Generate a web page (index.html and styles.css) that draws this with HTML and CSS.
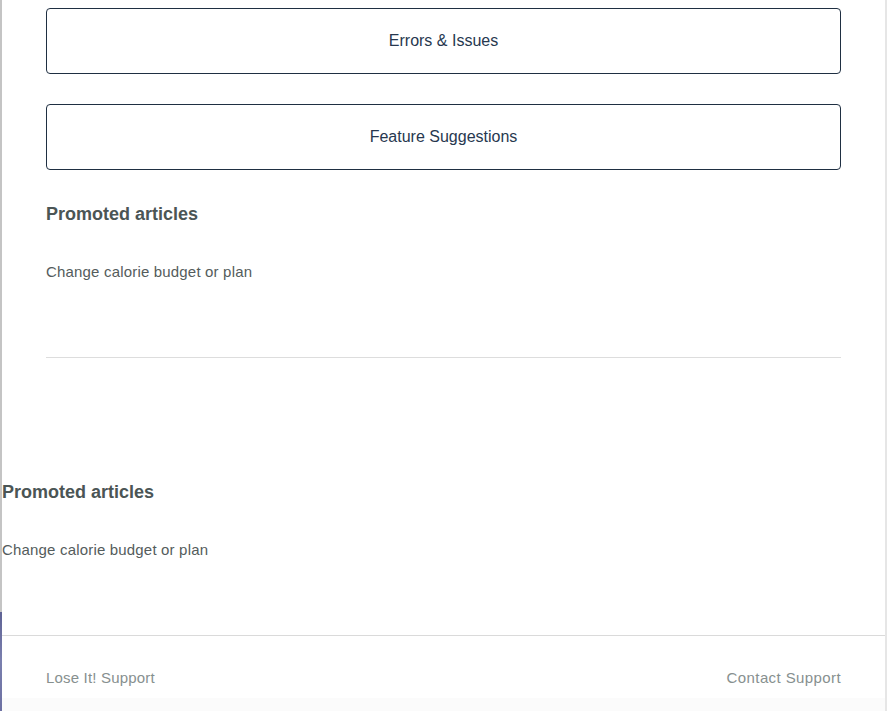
FILE: index.html
```html
<!DOCTYPE html>
<html lang="en">
<head>
<meta charset="utf-8">
<title>Lose It! Support</title>
<link rel="stylesheet" href="styles.css">
</head>
<body>
<div class="page">
  <div class="edge"></div>
  <div class="frame">
    <main class="content">
      <a class="tile" href="#">Errors &amp; Issues</a>
      <a class="tile tile-second" href="#">Feature Suggestions</a>
      <section class="promoted">
        <h3 class="promoted-title">Promoted articles</h3>
        <a class="promoted-link" href="#">Change calorie budget or plan</a>
      </section>
      <hr class="divider">
    </main>
    <section class="promoted promoted-outer">
      <h3 class="promoted-title">Promoted articles</h3>
      <a class="promoted-link" href="#">Change calorie budget or plan</a>
    </section>
    <footer class="footer">
      <a class="footer-link" href="#">Lose It! Support</a>
      <a class="footer-link" href="#">Contact Support</a>
    </footer>
  </div>
</div>
</body>
</html>
```
FILE: styles.css
```css
html, body {
  margin: 0;
  padding: 0;
  background: #ffffff;
  font-family: "Liberation Sans", Arial, Helvetica, sans-serif;
}

.page {
  display: flex;
  width: 890px;
  height: 711px;
  overflow: hidden;
}

.edge {
  flex: 0 0 2px;
  background: linear-gradient(#c4c4c4 0, #c4c4c4 612px, #5e6294 612px, #7a7fae 660px, #6c70a2 711px);
}

.frame {
  flex: 0 0 883px;
  border-right: 2px solid #e6e6e6;
  display: flex;
  flex-direction: column;
}

.content {
  padding: 8px 44px 0 44px;
  display: flex;
  flex-direction: column;
}

.tile {
  display: flex;
  align-items: center;
  justify-content: center;
  height: 64px;
  border: 1px solid #1f2f42;
  border-radius: 4px;
  color: #27384f;
  font-size: 16px;
  text-decoration: none;
}

.tile-second {
  margin-top: 30px;
}

.promoted {
  display: flex;
  flex-direction: column;
  align-items: flex-start;
}

.promoted-title {
  margin: 33px 0 0 0;
  font-size: 18px;
  line-height: 22px;
  font-weight: bold;
  color: #4b5555;
}

.promoted-link {
  margin-top: 37px;
  font-size: 15px;
  line-height: 20px;
  letter-spacing: 0.18px;
  color: #545c5c;
  text-decoration: none;
}

.divider {
  margin: 75px 0 0 0;
  border: 0;
  border-top: 1px solid #dddddd;
  height: 0;
}

.promoted-outer .promoted-title {
  margin-top: 123px;
}

.footer {
  margin-top: 75px;
  border-top: 1px solid #dadada;
  padding: 32px 44px 0 44px;
  display: flex;
  justify-content: space-between;
  flex: 1;
  background: linear-gradient(#ffffff 0, #ffffff 62px, #fbfbfb 62px);
}

.footer-link {
  font-size: 15px;
  line-height: 20px;
  letter-spacing: 0.18px;
  color: #87908f;
  text-decoration: none;
}

.footer-link + .footer-link {
  letter-spacing: 0.4px;
}
```
